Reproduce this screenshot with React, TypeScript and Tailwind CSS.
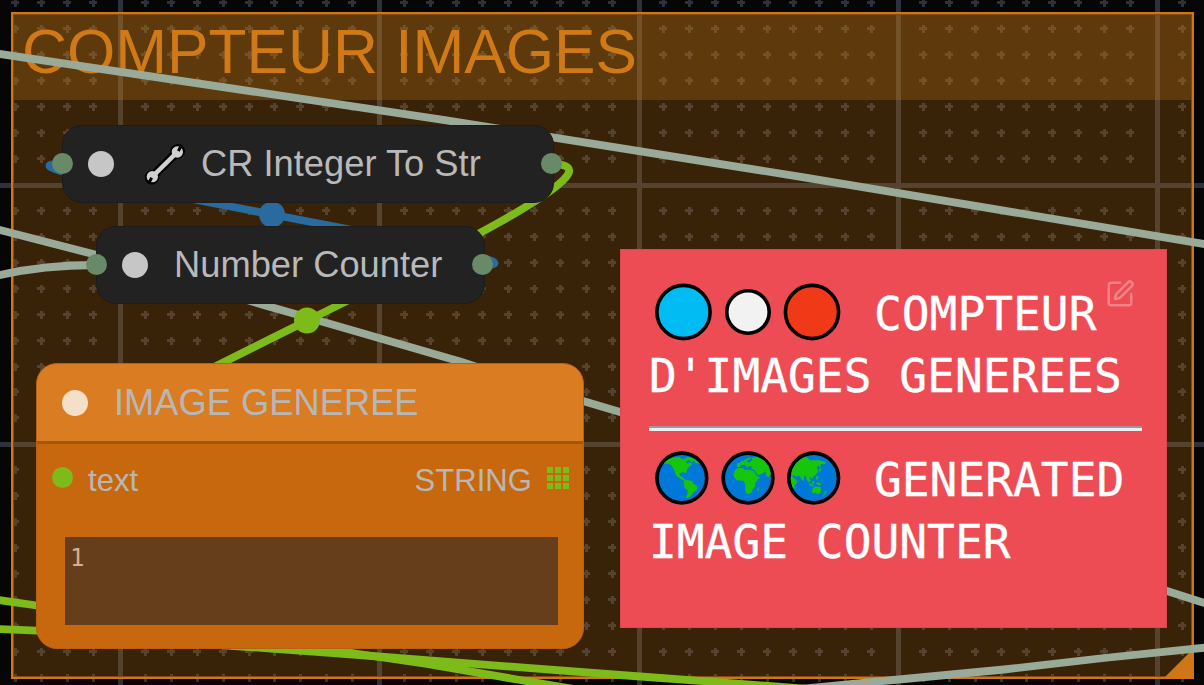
import React from "react";
import { SquarePen } from "lucide-react";

const STEP = 25.93;
const ORIGIN_X = 120.5;
const ORIGIN_Y = 185.5;
const columns = Array.from({ length: 48 }, (_, i) => i - 5);
const rows = Array.from({ length: 28 }, (_, i) => i - 8);

function Grid() {
  return (
    <svg className="absolute inset-0" width="1204" height="685" fill="#2c313a">
      {columns.filter((c) => c % 10 === 0).map((c) => (
        <rect key={c} x={Math.round(ORIGIN_X + c * STEP - 2.5)} y="0" width="5" height="685" />
      ))}
      {rows.filter((r) => r % 10 === 0).map((r) => (
        <rect key={r} x="0" y={Math.round(ORIGIN_Y + r * STEP - 2.5)} width="1204" height="5" />
      ))}
      {columns.filter((c) => c % 10 !== 0).map((c) =>
        rows.filter((r) => r % 10 !== 0).map((r) => {
          const x = Math.round(ORIGIN_X + c * STEP - 2.6);
          const y = Math.round(ORIGIN_Y + r * STEP - 2.5);
          return (
            <path key={`${c}:${r}`} d={`M${x - 3} ${y}h8v3h-8zM${x} ${y - 2}h3v2h-3zM${x} ${y + 3}h3v3h-3z`} />
          );
        }),
      )}
    </svg>
  );
}

function Group() {
  return (
    <section className="absolute left-[11px] top-[12px] h-[667px] w-[1183px] border-2 border-[#cf7717] bg-[#d07a15]/25">
      <header className="h-[86px] bg-[#d07a15]/25 pl-[9px]">
        <h1 className="whitespace-nowrap text-[62.2px] leading-[76px] text-[#d07917]">COMPTEUR IMAGES</h1>
      </header>
      <div className="pointer-events-none absolute inset-0 border border-[#854b10]" />
      <svg className="absolute bottom-0 right-0" width="28" height="26">
        <path d="M1 26L28 -1V26Z" fill="#cf7717" />
      </svg>
    </section>
  );
}

function Links() {
  return (
    <svg className="absolute inset-0" width="1204" height="685" fill="none" strokeWidth="7.8">
      <g stroke="#9aaa99">
        <path d="M-2 53.7C133 72.5 267 93 400 113.3C535 134 670 155.500 804 177.3C937 199 1070 221 1206 244.300" />
        <path d="M-2 229.500L93 254L267 306L327 323L460 361.500L583 401L620 412L1167 591L1206 603.500" />
        <path d="M-2 275.500C30 268 65 265 96 265" />
        <path d="M800 689L904 679L1004 669.500L1104 658L1206 647.500" />
      </g>
      <g stroke="#7dbb1a">
        <path d="M-2 600L37 605.500L220 633.500L345 652L427 664L520 680L580 690" />
        <path d="M-2 629L37 630.700L220 645L320 652L620 675L810 689" />
        <path d="M551 164C696 164 -83 478 62 478" />
        <circle cx="307" cy="320.500" r="13" fill="#7dbb1a" stroke="none" />
      </g>
      <path d="M482 265C591 265 -47 164 62 164" stroke="#296a9f" />
      <circle cx="272" cy="214.500" r="13" fill="#296a9f" />
    </svg>
  );
}

function Wrench() {
  return (
    <svg width="44" height="44" viewBox="430 426 132 132" fill="none">
      <path d="M457 531L534 455" stroke="#000" strokeWidth="27" />
      <circle cx="457" cy="532" r="22" fill="#000" />
      <circle cx="534" cy="454" r="22" fill="#000" />
      <path d="M459 529L532 457" stroke="#d0d0d0" strokeWidth="13" />
      <circle cx="458" cy="530" r="17" fill="#d0d0d0" />
      <circle cx="533" cy="456" r="17" fill="#d0d0d0" />
      <path d="M456 533L446 551M536 453L546 435" stroke="#000" strokeWidth="9" />
    </svg>
  );
}

function CollapsedNode({ className, children }: { className: string; children: React.ReactNode }) {
  return (
    <article className={`absolute flex h-[78px] items-center rounded-[20px] border border-[#1c1c1c] bg-[#222] pl-[25px] text-[36.3px] leading-[78px] text-[#b9b9b9] ${className}`}>
      <span className="absolute -left-[11px] top-[27px] size-[21px] rounded-full bg-[#688a69]" />
      <span className="size-[26px] shrink-0 rounded-full bg-[#c6c6c6]" />
      {children}
      <span className="absolute -right-[9px] top-[27px] size-[21px] rounded-full bg-[#688a69]" />
    </article>
  );
}

function TextNode() {
  return (
    <article className="absolute left-[36px] top-[363px] flex h-[286px] w-[548px] flex-col overflow-hidden rounded-[21px] border border-[#b9610f] bg-[#c7680e] text-[#b7b7b7]">
      <header className="flex h-[80px] shrink-0 items-center border-b-[3px] border-[#a5560e] bg-[#da7c22] pl-[25px]">
        <span className="size-[26px] rounded-full bg-[#f6dfc8]" />
        <h2 className="ml-[26px] text-[36.3px] leading-[78px]">IMAGE GENEREE</h2>
      </header>
      <div className="flex h-[68px] items-center pl-[15px] pr-[14px] text-[31.1px] leading-[68px]">
        <span className="-mt-px size-[21px] rounded-full bg-[#7dbb1a]" />
        <span className="ml-[15px] mt-[5px]">text</span>
        <span className="ml-auto mt-[5px]">STRING</span>
        <div className="-mt-px ml-[15px] grid grid-cols-3 gap-[2px]">
          {Array.from({ length: 9 }, (_, i) => (
            <span key={i} className="size-[6px] bg-[#7dbb1a]" />
          ))}
        </div>
      </div>
      <div className="ml-[28px] mt-[25px] h-[88px] w-[493px] bg-[#663e1b] pl-[5px] pt-[7px] font-['DejaVu_Sans_Mono',monospace] text-[24px] leading-[28px] text-[#dcae86]">
        1
      </div>
    </article>
  );
}

function Discs() {
  return (
    <svg className="-mt-[4px] shrink-0" width="187" height="60" viewBox="0 0 187 60" stroke="#000" strokeWidth="3.6">
      <circle cx="28.500" cy="30" r="26.600" fill="#00bcf2" />
      <circle cx="93" cy="30" r="21.200" fill="#f2f2f2" />
      <circle cx="157" cy="30" r="26.600" fill="#f03a17" />
    </svg>
  );
}

function Globes() {
  return (
    <svg className="-mt-[4px] shrink-0" width="187" height="54" viewBox="105 63 561 162" fill="#16c60c">
      <g fill="#0078d7" stroke="#000" strokeWidth="11">
        <circle cx="185.500" cy="144" r="74.500" />
        <circle cx="384" cy="144" r="74.500" />
        <circle cx="581" cy="144" r="74.500" />
      </g>
      <path d="M130 101L142 90L158 83L180 81L184 86L199 88L194 83L207 81L224 88L240 101L229 100L221 92L215 98L208 90L198 94L203 102L211 97L217 105L209 109L202 116L200 126L195 130L191 126L179 130L180 138L187 140L192 147L201 151L197 155L187 149L174 142L168 136L162 119L154 106L145 101Z" />
      <path d="M191 157L200 149L216 153L221 162L233 169L230 180L219 188L211 200L202 204L197 201L202 194L203 181L194 174Z" />
      <path d="M341 136L344 122L352 115L368 113L373 119L391 120L402 124L411 139L420 141L410 153L405 159L406 169L398 178L395 187L386 192L379 190L375 178L376 166L371 152L351 151L344 145Z" />
      <path d="M351 111L351 100L361 99L363 94L371 94L377 87L391 82L391 87L380 93L387 98L396 91L394 84L412 80L432 91L446 108L453 131L446 142L440 139L437 125L426 131L414 136L403 120L394 116L397 110L388 108L382 113L375 104L363 105L360 111ZM413 174L417 171L415 182L411 182Z" />
      <path d="M512 146L517 118L529 98L547 85L558 80L572 91L598 91L618 96L614 103L602 102L602 111L594 108L591 113L595 124L588 134L580 138L579 147L572 142L568 143L573 154L566 157L560 150L557 137L552 139L551 154L544 148L538 137L528 140L521 135L517 139L529 150L531 158L522 168L524 176L517 171Z" />
      <path d="M576 181L580 173L588 169L594 172L599 168L604 180L601 190L592 193L587 188L577 189ZM616 182L620 184L613 196L608 198ZM589 138L595 139L593 149L588 148ZM578 153L584 154L580 163L575 162ZM565 159L583 167L580 170L568 166ZM586 159L595 157L605 165L596 166ZM596 124L603 111L605 116L600 126Z" />
    </svg>
  );
}

function Note() {
  return (
    <aside className="absolute left-[620px] top-[249px] flex h-[379px] w-[547px] flex-col border border-[#d94850] bg-[#ed4c55] pl-[28px] pr-[24px] pt-[33px] font-['DejaVu_Sans_Mono',monospace] text-[46.2px] leading-[62px] text-white [-webkit-text-stroke:0.35px_white]">
      <div className="flex h-[62px] items-center whitespace-pre pl-[6px]">
        <Discs />
        <span className="ml-[32px]">COMPTEUR</span>
      </div>
      <div className="h-[62px] whitespace-pre">D'IMAGES GENEREES</div>
      <div className="mb-[18px] mt-[19px] h-[5px] border-b-[3px] border-t-2 border-b-[#eeeeee] border-t-[#9a9a9a]" />
      <div className="flex h-[62px] items-center whitespace-pre pl-[6px]">
        <Globes />
        <span className="ml-[32px]">GENERATED</span>
      </div>
      <div className="h-[62px] whitespace-pre">IMAGE COUNTER</div>
      <SquarePen className="absolute right-[31px] top-[29px] text-white/30" size={30} strokeWidth={2} />
    </aside>
  );
}

export default function App() {
  return (
    <main className="relative h-[685px] w-[1204px] overflow-hidden bg-[#060606] font-['Liberation_Sans',Arial,sans-serif]">
      <Grid />
      <Group />
      <Links />
      <CollapsedNode className="left-[62px] top-[125px] w-[492px]">
        <span className="ml-[29px]"><Wrench /></span>
        <span className="ml-[14px] whitespace-nowrap">CR Integer To Str</span>
      </CollapsedNode>
      <CollapsedNode className="left-[96px] top-[226px] w-[389px]">
        <span className="ml-[26px] whitespace-nowrap">Number Counter</span>
      </CollapsedNode>
      <TextNode />
      <Note />
    </main>
  );
}
